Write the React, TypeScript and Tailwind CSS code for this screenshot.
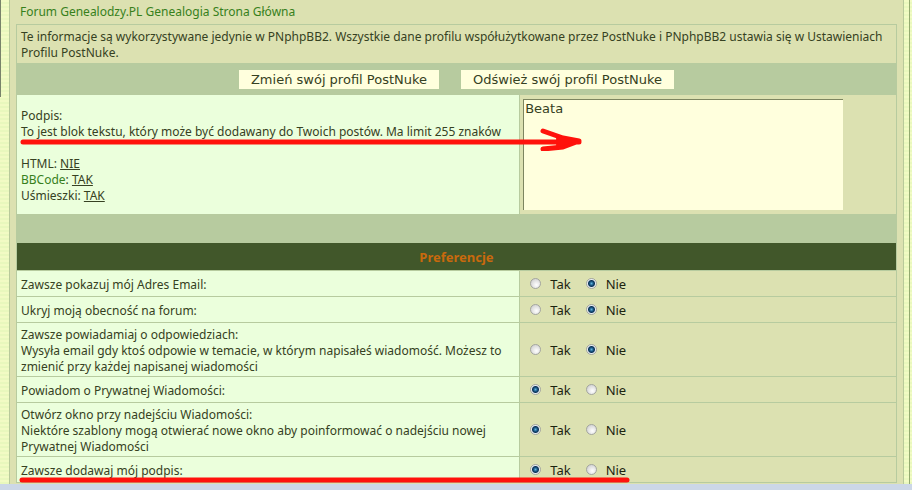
import React from "react";

type Preference = {
  id: string;
  title: string;
  hint?: string;
  value: "tak" | "nie";
};

const preferences: Preference[] = [
  { id: "email", title: "Zawsze pokazuj mój Adres Email:", value: "nie" },
  { id: "hidden", title: "Ukryj moją obecność na forum:", value: "nie" },
  {
    id: "notify",
    title: "Zawsze powiadamiaj o odpowiedziach:",
    hint: "Wysyła email gdy ktoś odpowie w temacie, w którym napisałeś wiadomość. Możesz to zmienić przy każdej napisanej wiadomości",
    value: "nie",
  },
  { id: "pm", title: "Powiadom o Prywatnej Wiadomości:", value: "tak" },
  {
    id: "popup",
    title: "Otwórz okno przy nadejściu Wiadomości:",
    hint: "Niektóre szablony mogą otwierać nowe okno aby poinformować o nadejściu nowej Prywatnej Wiadomości",
    value: "tak",
  },
  { id: "signature", title: "Zawsze dodawaj mój podpis:", value: "tak" },
];

function Radio({ name, label, checked }: { name: string; label: string; checked: boolean }) {
  return (
    <label className="flex items-center gap-[9px]">
      <input
        type="radio"
        name={name}
        defaultChecked={checked}
        className="size-[11px] appearance-none rounded-full border border-[#a3a5a0] bg-[radial-gradient(circle_at_60%_65%,#ffffff_0%,#d2d2d2_80%)] checked:bg-[radial-gradient(circle_at_50%_50%,#5fb4dc_0px,#17527f_2px,#0e3458_3px,#e8eef2_4px)]"
      />
      {label}
    </label>
  );
}

function PreferenceRow({ item, marked }: { item: Preference; marked: boolean }) {
  return (
    <tr>
      <th
        scope="row"
        className="relative h-[25px] bg-[#ebffdc] px-1 pt-[4px] pb-px text-left font-normal"
      >
        {item.title}
        {item.hint && <p>{item.hint}</p>}
        {marked && (
          <svg
            className="pointer-events-none absolute -bottom-px left-[2px] z-10 h-[6px] w-[611px]"
            viewBox="0 0 611 6"
            aria-hidden="true"
          >
            <path d="M3 3H608" stroke="#ff120c" strokeWidth="5" strokeLinecap="round" />
          </svg>
        )}
      </th>
      <td className="bg-[#dce1b1] px-[10px] text-[13px] text-[#1c2410]">
        <div className="flex gap-[15px]">
          <Radio name={item.id} label="Tak" checked={item.value === "tak"} />
          <Radio name={item.id} label="Nie" checked={item.value === "nie"} />
        </div>
      </td>
    </tr>
  );
}

function ProfileButton({ children }: { children: React.ReactNode }) {
  return (
    <button
      type="button"
      className="h-[19px] bg-[#ffffdd] px-3 font-['DejaVu_Sans',sans-serif] text-[13px] leading-[19px]"
    >
      {children}
    </button>
  );
}

export default function App() {
  return (
    <div className="overflow-x-hidden font-['Noto_Sans',sans-serif] text-[12px] leading-4 text-[#364122]">
      <div className="flex bg-[repeating-linear-gradient(#f2fbc4_0px,#f2fbc4_2px,#e9f8bd_2px,#e9f8bd_4px)]">
        <div className="w-[9px] shrink-0">
          <div className="h-[97px] w-px bg-[#78836a]" />
        </div>
        <main className="min-w-0 flex-1 border-x border-[#b9c99b] bg-[#dce1b1] px-[6px] pb-px">
          <nav className="flex h-6 items-center pl-1">
            <a href="#" className="text-[#37801c]">
              Forum Genealodzy.PL Genealogia Strona Główna
            </a>
          </nav>
          <form>
            <table className="w-full table-fixed border-separate border-spacing-px bg-[#b7cb9f]">
              <colgroup>
                <col className="w-[57.2%]" />
                <col />
              </colgroup>
              <tbody>
                <tr>
                  <td colSpan={2} className="bg-[#dce1b1] px-1 pt-[4px] pb-[2px]">
                    Te informacje są wykorzystywane jedynie w PNphpBB2. Wszystkie dane profilu
                    współużytkowane przez PostNuke i PNphpBB2 ustawia się w Ustawieniach Profilu
                    PostNuke.
                  </td>
                </tr>
                <tr>
                  <td colSpan={2} className="h-[30px]">
                    <div className="flex justify-center gap-[22px]">
                      <ProfileButton>Zmień swój profil PostNuke</ProfileButton>
                      <ProfileButton>Odśwież swój profil PostNuke</ProfileButton>
                    </div>
                  </td>
                </tr>
                <tr>
                  <td className="relative bg-[#ebffdc] px-1 pt-[2px]">
                    <label htmlFor="signature-text" className="block">
                      Podpis:
                    </label>
                    <p>
                      To jest blok tekstu, który może być dodawany do Twoich postów. Ma limit 255
                      znaków
                    </p>
                    <p className="mt-4">
                      HTML: <u>NIE</u>
                    </p>
                    <p>
                      <a href="#" className="text-[#37801c]">
                        BBCode
                      </a>
                      : <u>TAK</u>
                    </p>
                    <p>
                      Uśmieszki: <u>TAK</u>
                    </p>
                    <svg
                      className="pointer-events-none absolute top-8 left-[2px] z-10 h-6 w-[564px]"
                      viewBox="0 0 564 24"
                      fill="none"
                      stroke="#ff120c"
                      strokeWidth="5"
                      strokeLinecap="round"
                      strokeLinejoin="round"
                      aria-hidden="true"
                    >
                      <path d="M4 15H560M524 4L544 11L560 14L544 20L524 22" />
                      <path d="M538 9L560 14L538 20Z" fill="#ff120c" strokeWidth="1" />
                    </svg>
                  </td>
                  <td className="bg-[#dce1b1] px-[3px] py-1">
                    <textarea
                      id="signature-text"
                      defaultValue="Beata"
                      className="block h-[111px] w-[320px] resize-none border-t border-l border-[#7d8560] bg-[#ffffdd] px-px pt-px font-['DejaVu_Sans',sans-serif] text-[13px] leading-4"
                    />
                  </td>
                </tr>
                <tr>
                  <td colSpan={2} className="h-[27px]" />
                </tr>
                <tr>
                  <th
                    colSpan={2}
                    scope="colgroup"
                    className="h-[27px] bg-[#41572a] text-center text-[13px] font-bold text-[#c9690d]"
                  >
                    Preferencje
                  </th>
                </tr>
                {preferences.map((item) => (
                  <PreferenceRow key={item.id} item={item} marked={item.id === "signature"} />
                ))}
              </tbody>
            </table>
          </form>
        </main>
        <div className="mr-[2px] w-[6px] shrink-0 border-r border-[#93a970]" />
      </div>
      <div className="h-[6px] bg-[#ccd7e7]" />
    </div>
  );
}
